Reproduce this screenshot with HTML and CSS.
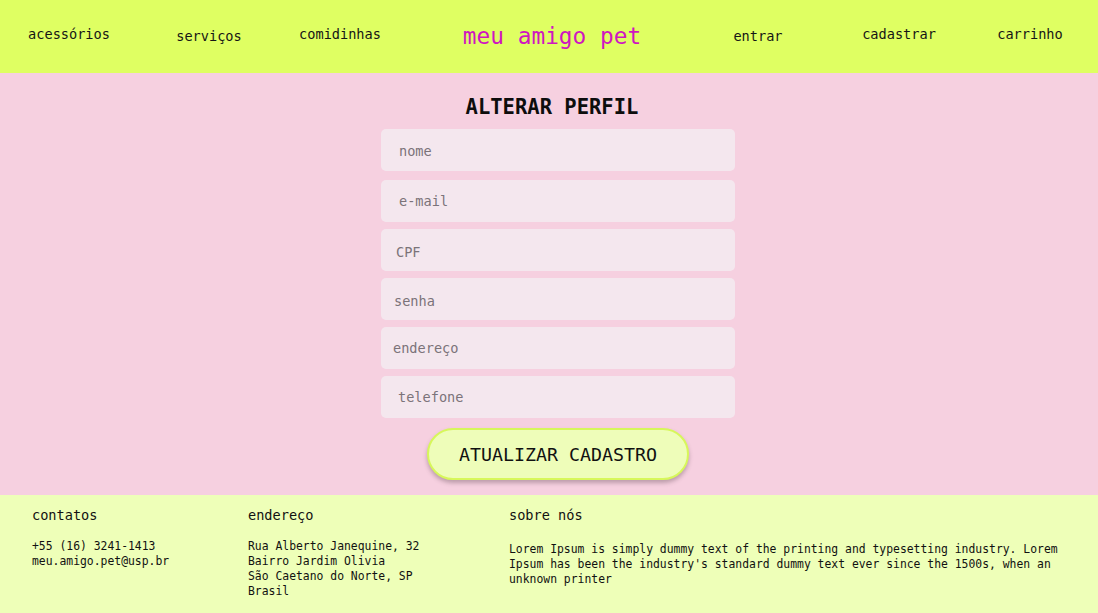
FILE: index.html
```html
<!DOCTYPE html>
<html lang="pt-br">
<head>
<meta charset="utf-8">
<title>meu amigo pet - alterar perfil</title>
<link rel="stylesheet" href="styles.css">
</head>
<body>
<header class="topbar">
  <nav class="nav">
    <a class="nav-link" href="#">acessórios</a>
    <a class="nav-link nav-link--low" href="#">serviços</a>
    <a class="nav-link" href="#">comidinhas</a>
    <a class="logo" href="#">meu amigo pet</a>
    <a class="nav-link nav-link--low" href="#">entrar</a>
    <a class="nav-link" href="#">cadastrar</a>
    <a class="nav-link" href="#">carrinho</a>
  </nav>
</header>
<main class="main">
  <h1 class="title">ALTERAR PERFIL</h1>
  <form class="form">
    <input class="field field--nome" type="text" placeholder="nome">
    <input class="field field--email" type="email" placeholder="e-mail">
    <input class="field field--cpf" type="text" placeholder="CPF">
    <input class="field field--senha" type="password" placeholder="senha">
    <input class="field field--end" type="text" placeholder="endereço">
    <input class="field field--tel" type="tel" placeholder="telefone">
    <button class="submit" type="button">ATUALIZAR CADASTRO</button>
  </form>
</main>
<footer class="footer">
  <section class="fcol">
    <h2 class="fhead">contatos</h2>
    <p class="ftext">+55 (16) 3241-1413<br>meu.amigo.pet@usp.br</p>
  </section>
  <section class="fcol">
    <h2 class="fhead">endereço</h2>
    <p class="ftext">Rua Alberto Janequine, 32<br>Bairro Jardim Olivia<br>São Caetano do Norte, SP<br>Brasil</p>
  </section>
  <section class="fcol">
    <h2 class="fhead">sobre nós</h2>
    <p class="ftext ftext--about">Lorem Ipsum is simply dummy text of the printing and typesetting industry. Lorem Ipsum has been the industry's standard dummy text ever since the 1500s, when an unknown printer</p>
  </section>
</footer>
</body>
</html>
```

FILE: styles.css
```css
* { box-sizing: border-box; }

html, body {
  margin: 0;
  padding: 0;
}

body {
  font-family: "DejaVu Sans Mono", "Liberation Mono", monospace;
  background: #f6d0e0;
  color: #111;
  height: 613px;
  display: flex;
  flex-direction: column;
}

.topbar {
  height: 73px;
  background: #dfff62;
}

.nav {
  height: 100%;
  display: grid;
  grid-template-columns: 138px 142px 120px 304px 108px 174px 88px;
  justify-items: center;
  align-items: center;
}

.nav-link {
  color: #151515;
  text-decoration: none;
  font-size: 13.6px;
  line-height: 16px;
  margin-top: -6px;
}

.nav-link--low {
  margin-top: -2px;
}

.logo {
  color: #cf17c0;
  text-decoration: none;
  font-size: 22.8px;
  line-height: 26px;
  margin-top: -1px;
}

.main {
  flex: 1;
  display: flex;
  flex-direction: column;
  align-items: center;
  padding-top: 22px;
}

.title {
  margin: 0 0 0 6px;
  font-size: 20.5px;
  line-height: 24px;
  font-weight: bold;
  color: #0d0d0d;
}

.form {
  margin: 10px 0 0 18px;
  width: 354px;
  display: flex;
  flex-direction: column;
  align-items: center;
  gap: 7px;
}

.field {
  width: 100%;
  height: 42px;
  border: none;
  border-radius: 5px;
  background: #f4e7ee;
  font-family: inherit;
  font-size: 13.6px;
  color: #333;
  padding: 0 0 0 18px;
  outline: none;
}

.field::placeholder {
  color: #7b7379;
}

.field--nome { padding-top: 2px; }
.field--email { margin-top: 2px; padding-left: 18px; }
.field--cpf { padding-left: 15px; padding-top: 4px; }
.field--senha { padding-left: 13px; padding-top: 4px; }
.field--end { padding-left: 12px; }
.field--tel { padding-left: 17px; }

.submit {
  margin-top: 3px;
  width: 262px;
  height: 52px;
  border-radius: 26px;
  border: 2px solid #d7f75a;
  background: #eefdb9;
  box-shadow: 0 3px 4px rgba(80, 60, 70, 0.35);
  font-family: inherit;
  font-size: 18.3px;
  color: #111;
  cursor: pointer;
}

.footer {
  height: 118px;
  background: #eeffb8;
  display: grid;
  grid-template-columns: 216px 261px 1fr;
  padding: 11px 38px 0 32px;
}

.fhead {
  margin: 0;
  font-size: 13.6px;
  line-height: 18px;
  font-weight: normal;
  color: #111;
}

.ftext {
  margin: 15px 0 0;
  font-size: 11.4px;
  line-height: 15px;
  color: #111;
}

.ftext--about {
  margin-top: 18px;
}
```
